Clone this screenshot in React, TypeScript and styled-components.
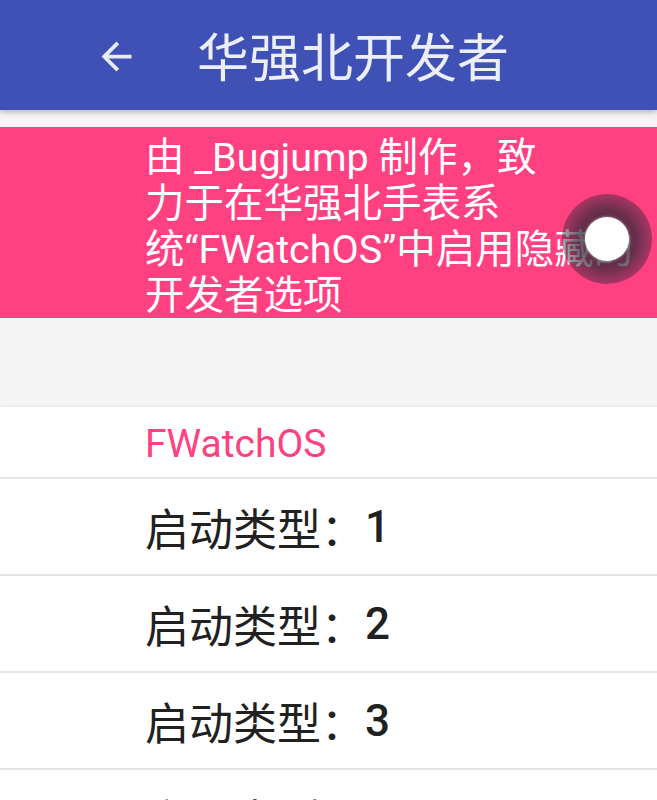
import React from 'react';
import styled, { createGlobalStyle } from 'styled-components';

const GlobalStyle = createGlobalStyle`
  html, body {
    margin: 0;
    padding: 0;
    background: #f5f5f5;
    font-family: Roboto, "Noto Sans CJK SC", sans-serif;
  }
`;

const Screen = styled.div`
  width: 657px;
  height: 800px;
  overflow: hidden;
  background: #f5f5f5;
  display: flex;
  flex-direction: column;
`;

const Toolbar = styled.header`
  height: 110px;
  flex-shrink: 0;
  background: #3f51b5;
  display: flex;
  align-items: center;
  padding-left: 94px;
  box-shadow: 0 2px 6px rgba(0, 0, 0, 0.28);
  position: relative;
  z-index: 2;
`;

const BackIcon = styled.svg`
  width: 45px;
  height: 45px;
  margin-top: 2px;
  fill: #e8eaf6;
`;

const Title = styled.h1`
  margin: 9px 0 0 58px;
  font-size: 52px;
  font-weight: 400;
  color: #eceef9;
  line-height: 1;
`;

const Banner = styled.section`
  margin-top: 17px;
  height: 191px;
  flex-shrink: 0;
  background: #ff4081;
  padding: 8px 0 0 145px;
  box-sizing: border-box;
  position: relative;
  overflow: hidden;
`;

const BannerLine = styled.div`
  font-size: 39.5px;
  line-height: 46px;
  color: #fff;
  white-space: nowrap;
`;

const SwitchHalo = styled.div`
  position: absolute;
  left: 562px;
  top: 67px;
  width: 90px;
  height: 90px;
  border-radius: 50%;
  background: radial-gradient(
    circle,
    rgba(45, 40, 55, 0.85) 0%,
    rgba(45, 40, 55, 0.72) 45%,
    rgba(45, 40, 55, 0.4) 72%,
    rgba(45, 40, 55, 0) 100%
  );
  display: flex;
  align-items: center;
  justify-content: center;
`;

const SwitchThumb = styled.div`
  width: 44px;
  height: 44px;
  border-radius: 50%;
  background: #fff;
  box-shadow: 0 0 3px rgba(255, 255, 255, 0.6);
`;

const List = styled.div`
  margin-top: 89px;
  background: #fff;
  box-shadow: 0 -1px 3px rgba(0, 0, 0, 0.08);
  display: flex;
  flex-direction: column;
`;

const Category = styled.div`
  height: 72px;
  flex-shrink: 0;
  display: flex;
  align-items: center;
  padding-left: 145px;
  padding-top: 3px;
  box-sizing: border-box;
  font-size: 39px;
  color: #ff4081;
  border-bottom: 2px solid #e6e6e6;
`;

const Item = styled.div`
  height: 97px;
  flex-shrink: 0;
  box-sizing: border-box;
  display: flex;
  align-items: center;
  padding-left: 145px;
  font-size: 44px;
  color: #212121;
  border-bottom: 2px solid #e6e6e6;
`;

const Digit = styled.span`
  font-weight: 500;
`;

const bannerLines = [
  '由 _Bugjump 制作，致',
  '力于在华强北手表系',
  '统“FWatchOS”中启用隐藏的',
  '开发者选项',
];

const bootTypes = [1, 2, 3, 4, 5];

function App() {
  return (
    <>
      <GlobalStyle />
      <Screen>
        <Toolbar>
          <BackIcon viewBox="0 0 24 24">
            <path d="M20 11H7.83l5.59-5.59L12 4l-8 8 8 8 1.41-1.41L7.83 13H20v-2z" />
          </BackIcon>
          <Title>华强北开发者</Title>
        </Toolbar>

        <Banner>
          {bannerLines.map((line) => (
            <BannerLine key={line}>{line}</BannerLine>
          ))}
          <SwitchHalo>
            <SwitchThumb />
          </SwitchHalo>
        </Banner>

        <List>
          <Category>FWatchOS</Category>
          {bootTypes.map((n) => (
            <Item key={n}>
              启动类型：<Digit>{n}</Digit>
            </Item>
          ))}
        </List>
      </Screen>
    </>
  );
}

export default App;
